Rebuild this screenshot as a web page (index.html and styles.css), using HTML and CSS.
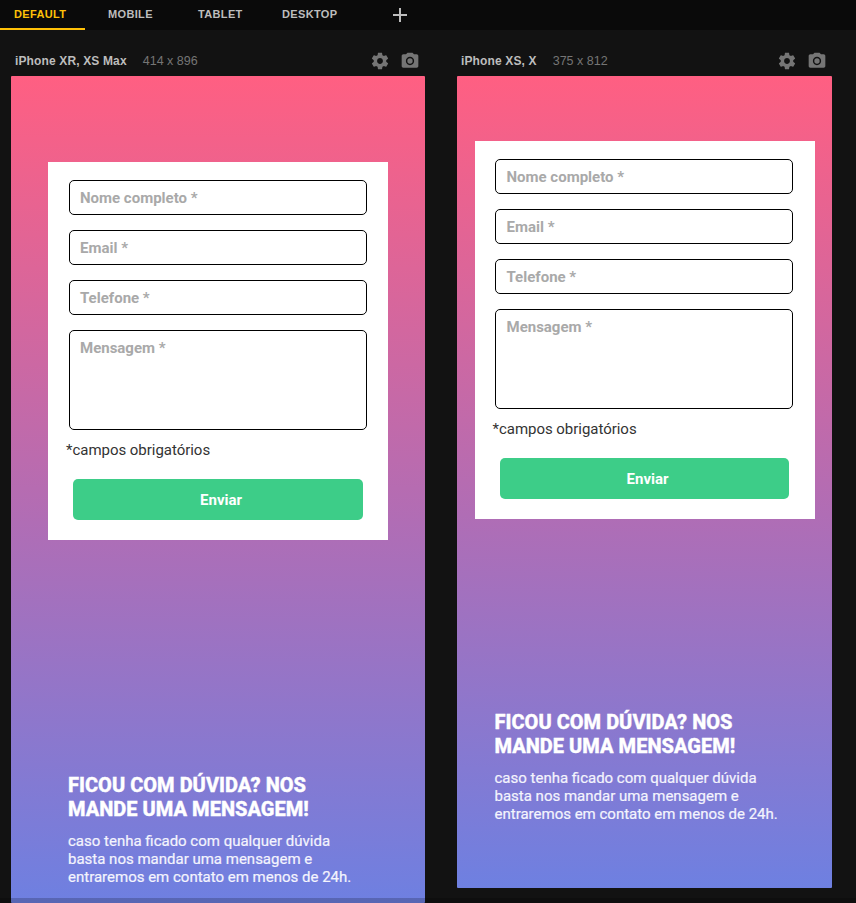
FILE: index.html
```html
<!DOCTYPE html>
<html lang="pt-BR">
<head>
<meta charset="utf-8">
<title>Responsive preview</title>
<link rel="stylesheet" href="styles.css">
</head>
<body>
<svg class="defs" width="0" height="0">
  <symbol id="gear" viewBox="0 0 24 24"><path d="M19.43 12.98c.04-.32.07-.64.07-.98s-.03-.66-.07-.98l2.11-1.65c.19-.15.24-.42.12-.64l-2-3.46c-.12-.22-.39-.3-.61-.22l-2.49 1c-.52-.4-1.08-.73-1.69-.98l-.38-2.65C14.46 2.18 14.25 2 14 2h-4c-.25 0-.46.18-.49.42l-.38 2.65c-.61.25-1.17.59-1.69.98l-2.49-1c-.23-.09-.49 0-.61.22l-2 3.46c-.13.22-.07.49.12.64l2.11 1.65c-.04.32-.07.65-.07.98s.03.66.07.98l-2.11 1.65c-.19.15-.24.42-.12.64l2 3.46c.12.22.39.3.61.22l2.49-1c.52.4 1.08.73 1.69.98l.38 2.65c.03.24.24.42.49.42h4c.25 0 .46-.18.49-.42l.38-2.65c.61-.25 1.17-.59 1.69-.98l2.49 1c.23.09.49 0 .61-.22l2-3.46c.12-.22.07-.49-.12-.64l-2.11-1.65zM12 15.5c-1.93 0-3.5-1.57-3.5-3.5s1.57-3.5 3.5-3.5 3.5 1.57 3.5 3.5-1.57 3.5-3.5 3.5z"/></symbol>
  <symbol id="camera" viewBox="0 0 24 24"><circle cx="12" cy="12" r="3.2"/><path d="M9 2L7.17 4H4c-1.100 0-2 .9-2 2v12c0 1.100.9 2 2 2h16c1.100 0 2-.9 2-2V6c0-1.100-.9-2-2-2h-3.170L15 2H9zm3 15c-2.760 0-5-2.240-5-5s2.240-5 5-5 5 2.240 5 5-2.240 5-5 5z"/></symbol>
</svg>
<nav class="tabs">
  <span class="tab tab-active">DEFAULT</span>
  <span class="tab tab-mobile">MOBILE</span>
  <span class="tab tab-tablet">TABLET</span>
  <span class="tab tab-desktop">DESKTOP</span>
  <svg class="plus" viewBox="0 0 14 14"><path d="M6 0h2v6h6v2H8v6H6V8H0V6h6z"/></svg>
</nav>
<main class="devices">
  <section class="device device-xr">
    <header class="bar">
      <b class="name">iPhone XR, XS Max</b><span class="size">414 x 896</span>
      <svg class="icon icon-gear"><use href="#gear"/></svg><svg class="icon icon-camera"><use href="#camera"/></svg>
    </header>
    <div class="screen">
      <form class="card">
        <label class="field">Nome completo *</label>
        <label class="field">Email *</label>
        <label class="field">Telefone *</label>
        <label class="field field-area">Mensagem *</label>
        <p class="note">*campos obrigatórios</p>
        <button class="send" type="button">Enviar</button>
      </form>
      <div class="copy">
        <h2>FICOU COM DÚVIDA? NOS<br>MANDE UMA MENSAGEM!</h2>
        <p>caso tenha ficado com qualquer dúvida<br>basta nos mandar uma mensagem e<br>entraremos em contato em menos de 24h.</p>
      </div>
    </div>
  </section>
  <section class="device device-xs">
    <header class="bar">
      <b class="name">iPhone XS, X</b><span class="size">375 x 812</span>
      <svg class="icon icon-gear"><use href="#gear"/></svg><svg class="icon icon-camera"><use href="#camera"/></svg>
    </header>
    <div class="screen">
      <form class="card">
        <label class="field">Nome completo *</label>
        <label class="field">Email *</label>
        <label class="field">Telefone *</label>
        <label class="field field-area">Mensagem *</label>
        <p class="note">*campos obrigatórios</p>
        <button class="send" type="button">Enviar</button>
      </form>
      <div class="copy">
        <h2>FICOU COM DÚVIDA? NOS<br>MANDE UMA MENSAGEM!</h2>
        <p>caso tenha ficado com qualquer dúvida<br>basta nos mandar uma mensagem e<br>entraremos em contato em menos de 24h.</p>
      </div>
    </div>
  </section>
</main>
<div class="shade"></div>
</body>
</html>
```
FILE: styles.css
```css
* { box-sizing: border-box; }
body {
  margin: 0;
  height: 903px;
  overflow: hidden;
  background: #121212;
  font-family: Roboto, sans-serif;
}
h2, p { margin: 0; }
.defs { position: absolute; }

.tabs {
  display: flex;
  height: 30px;
  background: #0a0a0a;
  color: #bdbdbd;
  font: bold 11px/28px "Liberation Sans", sans-serif;
  letter-spacing: 0.35px;
}
.tab { white-space: nowrap; }
.tab-active {
  width: 85px;
  padding-left: 14px;
  color: #ffc107;
  border-bottom: 2px solid #ffc107;
}
.tab-mobile { width: 90px; margin-left: 23px; }
.tab-tablet { width: 84px; }
.tab-desktop { width: 111px; }
.plus { width: 14px; height: 14px; margin-top: 8px; fill: #bdbdbd; }

.devices { display: flex; align-items: flex-start; gap: 32px; padding: 16px 0 0 11px; }
.device { flex: none; }
.device-xr { width: 414px; }
.device-xs { width: 375px; }
.bar {
  display: flex;
  height: 30px;
  padding: 0 5px 0 4px;
  font: 12px/30px "Liberation Sans", sans-serif;
}
.name { color: #bdbdbd; letter-spacing: 0.14px; }
.size { margin-left: 16px; color: #757575; font-size: 12.5px; }
.icon { width: 20px; height: 20px; margin-top: 5px; fill: #757575; }
.icon-gear { margin-left: auto; }
.icon-camera { margin-left: 10px; }

.screen {
  overflow: hidden;
  border-radius: 1px;
  background: linear-gradient(#ff5f82, #b06db5 54%, #6e80e1);
}
.device-xr .screen { height: 827px; padding: 86px 0 0 37px; }
.device-xs .screen { height: 812px; padding: 65px 0 0 18px; }

.card {
  display: flex;
  flex-direction: column;
  gap: 15px;
  width: 340px;
  height: 378px;
  padding: 18px 21px;
  background: #fff;
}
.device-xs .card { padding: 18px 22px 18px 20px; }
.field {
  flex: none;
  height: 35px;
  padding-left: 10px;
  border: 1px solid #000;
  border-radius: 5px;
  color: #a9a9a9;
  font-size: 15px;
  font-weight: 700;
  line-height: 35px;
}
.device-xs .field { padding-left: 10.5px; }
.field-area { height: 100px; }
.note { margin: -4px 0 0 -3px; color: #333; font-size: 15px; line-height: 18px; letter-spacing: -0.03px; }
.device-xs .note { margin-left: -2.5px; }
.send {
  flex: none;
  height: 41px;
  margin: 5px 4px 0;
  border: 0;
  border-radius: 5px;
  background: #3dcd88;
  color: #fff;
  font: 700 15px/39px Roboto, sans-serif;
  padding: 2px 0 0 6px;
}
.device-xs .send { margin: 5px 4px 0 5px; }

.copy { color: #fff; }
.device-xr .copy { margin: 233px 0 0 20px; }
.device-xs .copy { margin: 191px 0 0 19.5px; }
.copy h2 {
  font-size: 20px;
  font-weight: 800;
  line-height: 24px;
  letter-spacing: 0.02px;
  -webkit-text-stroke: 0.35px #fff;
}
.copy p {
  margin-top: 11px;
  font-size: 15px;
  line-height: 18px;
  color: #f4f4fd;
  -webkit-text-stroke: 0.2px #f4f4fd;
}

.shade {
  position: absolute;
  left: 0;
  right: 0;
  top: 898px;
  height: 5px;
  background: rgba(0, 0, 0, 0.2);
}
```
